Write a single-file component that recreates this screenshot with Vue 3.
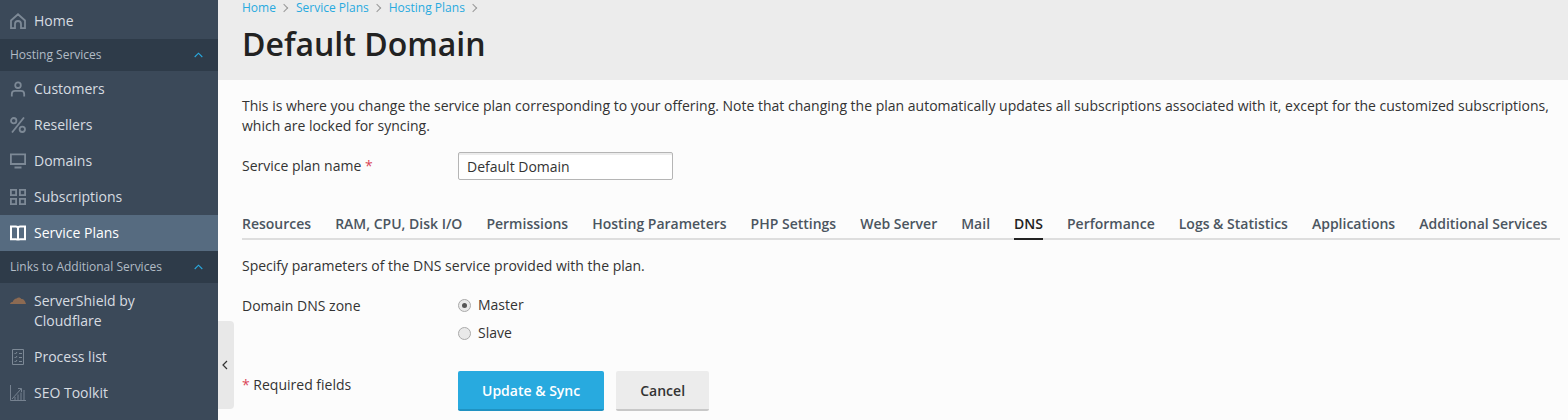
<script setup>
const tabs = ['Resources', 'RAM, CPU, Disk I/O', 'Permissions', 'Hosting Parameters', 'PHP Settings', 'Web Server', 'Mail', 'DNS', 'Performance', 'Logs & Statistics', 'Applications', 'Additional Services']
</script>

<template>
  <div class="page">
    <aside class="side">
      <a class="item"><svg class="ic" viewBox="0 0 16 16"><path d="M1 7.500 8 1.300l7 6.200V15.200h-4v-4.200a3 3 0 0 0-6 0v4.200H1z" fill="none" stroke="#7d8996" stroke-width="1.800"/></svg>Home</a>
      <div class="group"><span>Hosting Services</span><svg class="chev" viewBox="0 0 9 6"><path d="M.7 5 4.500 1.200 8.300 5" fill="none" stroke="#29a9df" stroke-width="1.100"/></svg></div>
      <a class="item"><svg class="ic" viewBox="0 0 16 16"><circle cx="8" cy="4.200" r="2.800" fill="none" stroke="#7d8996" stroke-width="1.800"/><path d="M1.800 15.500v-2.500c0-2 1.500-3.200 3.200-3.200h6c1.700 0 3.200 1.200 3.200 3.200v2.500" fill="none" stroke="#7d8996" stroke-width="1.800"/></svg>Customers</a>
      <a class="item"><svg class="ic" viewBox="0 0 16 16"><g fill="none" stroke="#7d8996" stroke-width="1.800"><circle cx="3.700" cy="3.700" r="2.700"/><circle cx="12.300" cy="12.300" r="2.700"/><path d="M14 .5 2 15.500"/></g></svg>Resellers</a>
      <a class="item"><svg class="ic" viewBox="0 0 16 16"><path d="M.9 1.400h14.200v9.600H.9z" fill="none" stroke="#7d8996" stroke-width="1.800"/><path d="M4.500 14.500h7" stroke="#7d8996" stroke-width="2"/></svg>Domains</a>
      <a class="item"><svg class="ic" viewBox="0 0 16 16"><g fill="none" stroke="#7d8996" stroke-width="1.800"><path d="M.9.900h5.200v5.200H.9zM9.900.900h5.200v5.200H9.900zM.9 9.900h5.200v5.200H.9zM9.900 9.900h5.200v5.200H9.900z"/></g></svg>Subscriptions</a>
      <a class="item active"><svg class="ic" viewBox="0 0 16 16"><path d="M1 1.500h4.800c1.200 0 2.200.6 2.200 1.700 0-1.100 1-1.700 2.200-1.700H15v12.800h-4.800c-1.200 0-2.200.3-2.200 1.200 0-.9-1-1.200-2.200-1.200H1zM8 3v12" fill="none" stroke="#fff" stroke-width="2"/></svg>Service Plans</a>
      <div class="group"><span>Links to Additional Services</span><svg class="chev" viewBox="0 0 9 6"><path d="M.7 5 4.500 1.200 8.300 5" fill="none" stroke="#29a9df" stroke-width="1.100"/></svg></div>
      <a class="item two"><svg class="ic cloud" viewBox="0 0 16 8"><path d="M0 8c.3-1.500 1.500-2 2.600-2C3.400 3.800 5 2.600 6.500 2.600 8 1 10.300 1.200 11.300 3c1.400-.3 3.500.6 4.700 5z" fill="#8c6a52"/></svg><span>ServerShield by<br>Cloudflare</span></a>
      <a class="item"><svg class="ic" viewBox="0 0 16 16"><g fill="none" stroke="#7d8996" stroke-width="1"><path d="M2.500.5h11v15h-11z"/><path d="M4.500 4l1 1 1.500-2M4.500 8l1 1 1.500-2M4.500 12l1 1 1.500-2M9 4.500h3M9 8.500h3M9 12.500h3"/></g></svg>Process list</a>
      <a class="item"><svg class="ic" viewBox="0 0 16 16"><g fill="none" stroke="#7d8996" stroke-width=".9"><path d="M.5 0v15.500H16M2 14l9-10M8 3.500h3.500V7"/><path d="M5 15v-3M8 15v-5.500M11 15V7.500M14 15V5"/></g></svg>SEO Toolkit</a>
    </aside>

    <main class="main">
      <button class="handle"><svg viewBox="0 0 6 10" width="6" height="10"><path d="M5 1 1 5l4 4" fill="none" stroke="#333" stroke-width="1.200"/></svg></button>
      <header class="head">
        <nav class="crumbs">
          <a>Home</a><i></i><a>Service Plans</a><i></i><a>Hosting Plans</a><i></i>
        </nav>
        <h1>Default Domain</h1>
      </header>
      <section class="body">
        <p class="hint">This is where you change the service plan corresponding to your offering. Note that changing the plan automatically updates all subscriptions associated with it, except for the customized subscriptions, which are locked for syncing.</p>
        <div class="row name">
          <label class="lab">Service plan name <em>*</em></label>
          <input class="field" value="Default Domain">
        </div>
        <div class="tabs">
          <span v-for="t in tabs" :key="t" class="tab" :class="{ on: t === 'DNS' }">{{ t }}</span>
        </div>
        <p class="spec">Specify parameters of the DNS service provided with the plan.</p>
        <div class="row zone">
          <label class="lab">Domain DNS zone</label>
          <div class="radios">
            <label class="radio"><b class="dot sel"></b>Master</label>
            <label class="radio"><b class="dot"></b>Slave</label>
          </div>
        </div>
        <div class="row foot">
          <span class="lab req"><em>*</em> Required fields</span>
          <div class="btns">
            <button class="btn primary">Update &amp; Sync</button>
            <button class="btn">Cancel</button>
          </div>
        </div>
      </section>
    </main>
  </div>
</template>

<style>
html, body { margin: 0; overflow: hidden; }
</style>

<style scoped>
.page { display: flex; width: 1568px; height: 420px; overflow: hidden; font-family: "Open Sans", sans-serif; font-size: 14px; line-height: 20px; color: #333; }
.side { width: 218px; flex: none; background: #3b4959; padding-top: 3px; box-sizing: border-box; }
.item { display: flex; align-items: center; height: 36px; padding-left: 10px; color: #d7dce1; gap: 8px; box-sizing: border-box; }
.item.two { height: 56px; align-items: flex-start; padding-top: 8px; }
.item.active { background: #566b80; color: #fff; }
.ic { width: 16px; height: 16px; flex: none; }
.cloud { height: 8px; margin-top: 5px; }
.group { display: flex; justify-content: space-between; align-items: center; height: 32px; padding: 0 15px 0 10px; background: #2e3b49; color: #b2bcc6; font-size: 12px; box-sizing: border-box; }
.chev { width: 9px; height: 6px; }
.main { flex: 1; position: relative; background: #fcfcfc; min-width: 0; }
.handle { position: absolute; left: 0; top: 321px; width: 16px; height: 88px; padding: 0 2px 0 0; display: flex; align-items: center; justify-content: center; border: 0; background: #e8e8e8; border-radius: 0 4px 4px 0; }
.head { height: 80px; background: #ececec; padding-left: 24px; box-sizing: border-box; overflow: hidden; }
.crumbs { display: flex; align-items: center; height: 16px; font-size: 12px; line-height: 16px; color: #28aadf; }
.crumbs i { width: 5px; height: 5px; border-top: 1px solid #999; border-right: 1px solid #999; transform: rotate(45deg); margin: 0 9px 0 5px; }
h1 { margin: 9px 0 0; font-size: 32px; line-height: 38px; font-weight: 600; color: #222; }
.body { padding: 16px 8px 0 24px; }
.hint { margin: 0; color: #333; }
.row { display: flex; }
.lab { width: 216px; flex: none; color: #333; }
em { color: #d0021b; font-style: normal; opacity: .75; }
.name { margin-top: 16px; align-items: center; height: 28px; }
.name .lab { margin-top: -1px; }
.field { width: 215px; height: 28px; box-sizing: border-box; border: 1px solid #b5b5b5; border-radius: 2px; box-shadow: inset 0 2px 0 #ececec; padding: 0 8px; font: inherit; color: #333; background: #fff; outline: 0; }
.tabs { display: flex; gap: 24px; margin-top: 30px; height: 28px; border-bottom: 2px solid #dedede; }
.tab { font-weight: 600; color: #4b5560; height: 30px; line-height: 28px; box-sizing: border-box; white-space: nowrap; }
.tab.on { color: #222; border-bottom: 2px solid #222; }
.spec { margin: 16px 0 0; }
.zone { margin-top: 20px; }
.radios { display: flex; flex-direction: column; gap: 8px; margin-top: -1px; }
.radio { display: flex; align-items: center; gap: 7px; color: #333; }
.dot { width: 13px; height: 13px; box-sizing: border-box; border-radius: 50%; border: 1px solid #aaa; background: #e9e9e9; display: flex; align-items: center; justify-content: center; }
.dot.sel::after { content: ""; width: 5px; height: 5px; border-radius: 50%; background: #555; }
.foot { margin-top: 28px; }
.req { margin-top: 4px; }
.btns { display: flex; gap: 12px; }
.btn { height: 40px; padding: 2px 24px 0; border: 0; border-bottom: 2px solid #c8c8c8; border-radius: 2px; background: #ececec; font: inherit; font-weight: 600; color: #333; }
.btn.primary { background: #28aadf; border-bottom-color: #1f92c2; color: #fff; }
</style>
